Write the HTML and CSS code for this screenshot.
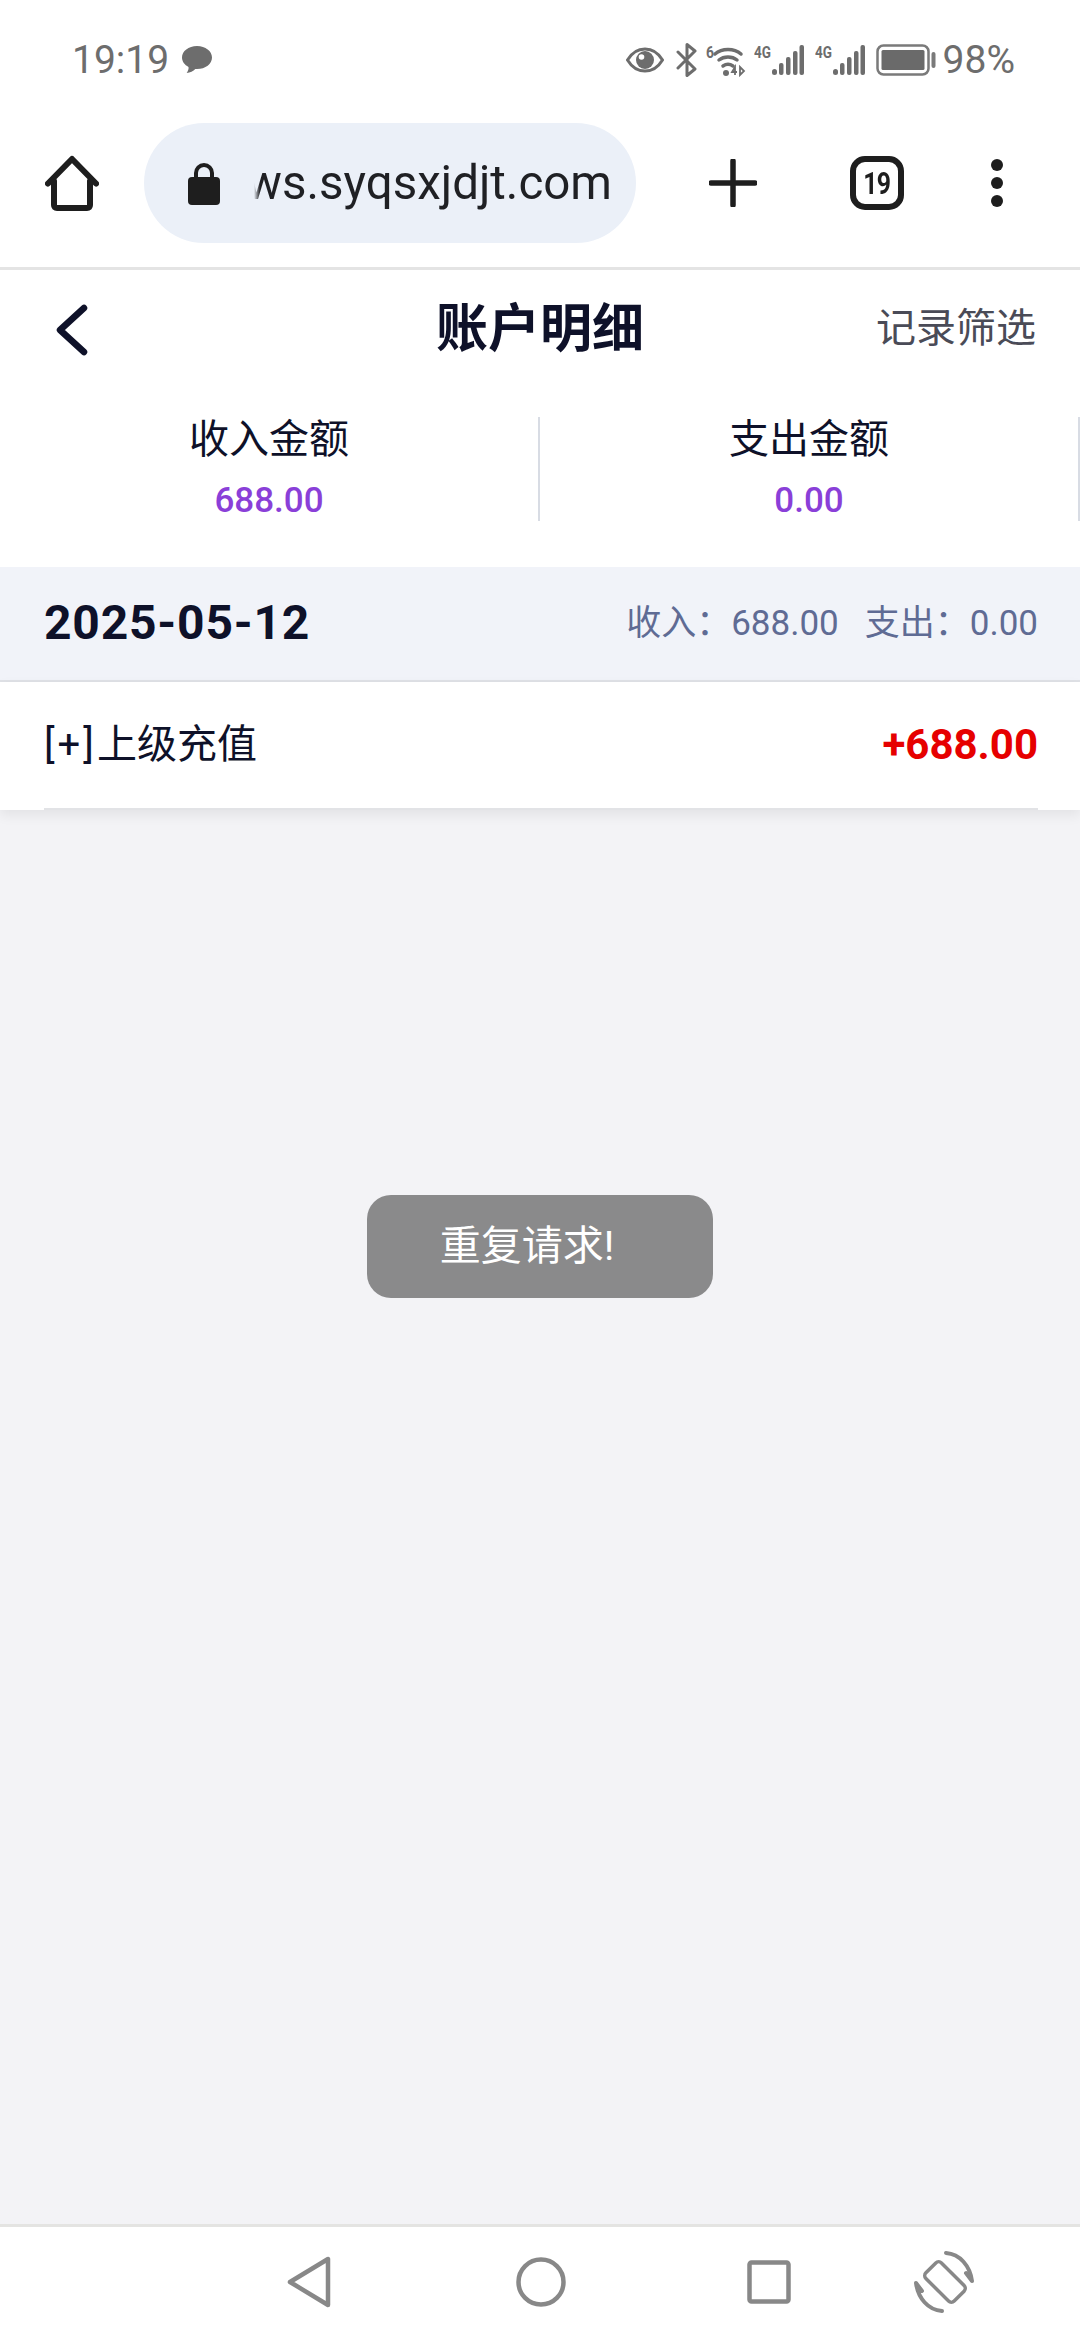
FILE: index.html
```html
<!DOCTYPE html>
<html lang="zh">
<head>
  <meta charset="UTF-8">
  <meta name="viewport" content="width=device-width, initial-scale=1">
  <title>账户明细</title>
  <link rel="stylesheet" href="styles.css">
</head>
<body>

  <!-- Status bar -->
  <div class="status">
    <div class="status-left">
      <span class="time">19:19</span>
      <svg class="ic-msg" viewBox="0 0 32 30"><path d="M16 1C7.5 1 1 6.200 1 12.500c0 4 2.600 7.400 6.500 9.400.4 1.800-.5 4.100-1.800 6.100 3.300-.3 6.700-1.700 8.600-4 .6.100 1.100.1 1.700.1 8.500 0 15-5.300 15-11.600S24.500 1 16 1z" fill="#6d6d6d"/></svg>
    </div>
    <div class="status-right">
      <svg class="ic-eye" viewBox="0 0 38 26"><path d="M1.500 13C6 5.500 12 2 19 2s13 3.500 17.500 11C32 20.500 26 24 19 24S6 20.500 1.500 13z" fill="none" stroke="#6d6d6d" stroke-width="3"/><circle cx="19" cy="13" r="9" fill="#6d6d6d"/><circle cx="15.500" cy="10" r="2.800" fill="#fff"/></svg>
      <svg class="ic-bt" viewBox="0 0 22 34"><path d="M2 9l17 17-8 6.500V1.500l8 6.500L2 25" fill="none" stroke="#6d6d6d" stroke-width="3" stroke-linejoin="round" stroke-linecap="round"/></svg>
      <svg class="ic-wifi" viewBox="0 0 40 34"><text x="0" y="15" class="mini" textLength="8" lengthAdjust="spacingAndGlyphs">6</text><path d="M9 11c7-6 19-6 26 0M13 17c5-4 13-4 18 0M17 23c3-2 7-2 10 0" fill="none" stroke="#6d6d6d" stroke-width="3.500" stroke-linecap="round"/><circle cx="20" cy="30" r="3" fill="#6d6d6d"/><path d="M29 32v-8l-3 5h5M34 24v8l4-4z" fill="none" stroke="#6d6d6d" stroke-width="1.800"/></svg>
      <svg class="ic-signal" viewBox="0 0 50 34"><text x="0" y="15" class="mini" textLength="17" lengthAdjust="spacingAndGlyphs">4G</text><rect x="18" y="26" width="5" height="6" rx="2.500"/><rect x="25" y="20" width="4.500" height="12" rx="2"/><rect x="32" y="14" width="4.500" height="18" rx="2"/><rect x="39" y="8" width="4.500" height="24" rx="2"/><rect x="45.500" y="2" width="4.500" height="30" rx="2"/></svg>
      <svg class="ic-signal" viewBox="0 0 50 34"><text x="0" y="15" class="mini" textLength="17" lengthAdjust="spacingAndGlyphs">4G</text><rect x="18" y="26" width="5" height="6" rx="2.500"/><rect x="25" y="20" width="4.500" height="12" rx="2"/><rect x="32" y="14" width="4.500" height="18" rx="2"/><rect x="39" y="8" width="4.500" height="24" rx="2"/><rect x="45.500" y="2" width="4.500" height="30" rx="2"/></svg>
      <svg class="ic-batt" viewBox="0 0 60 32"><rect x="1.500" y="1.500" width="51" height="29" rx="6" fill="none" stroke="#7a7a7a" stroke-width="2.500"/><rect x="5.500" y="6" width="43" height="20" rx="1.500" fill="#6a6a6a"/><rect x="55.500" y="8" width="4" height="16" rx="2" fill="#7a7a7a"/></svg>
      <span class="batt-text">98%</span>
    </div>
  </div>

  <!-- Browser toolbar -->
  <div class="toolbar">
    <svg class="ic-home" viewBox="0 0 54 56"><path d="M9 26v24c0 1.700 1 3 3 3h30c2 0 3-1.300 3-3V26M3 28.500L27 4l24 24.500" fill="none" stroke="#1e1e1e" stroke-width="6" stroke-linecap="round" stroke-linejoin="round"/></svg>
    <div class="urlbar">
      <svg class="ic-lock" viewBox="0 0 32 43"><path d="M8 18V11a8 8 0 0 1 16 0v7" fill="none" stroke="#1e1e1e" stroke-width="4"/><rect x="0" y="15" width="32" height="28" rx="4" fill="#1e1e1e"/></svg>
      <div class="url">ws.syqsxjdjt.com</div>
    </div>
    <svg class="ic-plus" viewBox="0 0 48 48"><path d="M24 2v44M2 24h44" stroke="#1e1e1e" stroke-width="5.500" stroke-linecap="round"/></svg>
    <div class="tabs"><span>19</span></div>
    <svg class="ic-dots" viewBox="0 0 12 48"><circle cx="6" cy="6" r="6"/><circle cx="6" cy="24" r="6"/><circle cx="6" cy="42" r="6"/></svg>
  </div>

  <!-- Page header -->
  <div class="header">
    <svg class="ic-back" viewBox="0 0 32 52"><path d="M28 4L4 26l24 22" fill="none" stroke="#0e1129" stroke-width="6.500" stroke-linecap="round" stroke-linejoin="round"/></svg>
    <div class="title">账户明细</div>
    <div class="filter">记录筛选</div>
  </div>

  <!-- Totals -->
  <div class="summary">
    <div class="sum-col">
      <div class="sum-label">收入金额</div>
      <div class="sum-value">688.00</div>
    </div>
    <div class="sum-col">
      <div class="sum-label">支出金额</div>
      <div class="sum-value">0.00</div>
    </div>
  </div>

  <!-- Day group -->
  <div class="day">
    <div class="day-date">2025-05-12</div>
    <div class="day-totals">
      <span>收入：688.00</span>
      <span>支出：0.00</span>
    </div>
  </div>
  <div class="record">
    <div class="record-inner">
      <div class="record-name"><span class="record-tag">[+]</span>上级充值</div>
      <div class="record-amount">+688.00</div>
    </div>
  </div>

  <main class="empty">
    <div class="toast">重复请求!</div>
  </main>

  <!-- Navigation bar -->
  <div class="navbar">
    <svg class="ic-navback" viewBox="0 0 44 52"><path d="M41 3v46L3 26z" fill="none" stroke="#888" stroke-width="4.500" stroke-linejoin="round"/></svg>
    <svg class="ic-navhome" viewBox="0 0 50 50"><circle cx="25" cy="25" r="22.500" fill="none" stroke="#888" stroke-width="4.500"/></svg>
    <svg class="ic-navrecent" viewBox="0 0 44 44"><rect x="2.500" y="2.500" width="39" height="39" rx="2" fill="none" stroke="#888" stroke-width="4.500"/></svg>
    <svg class="ic-navrotate" viewBox="0 0 64 62"><rect x="21" y="11" width="22" height="40" rx="4" transform="rotate(-45 32 31)" fill="none" stroke="#888" stroke-width="3.500"/><path d="M33 2C47 3 57 15 59 30l-6-8M29 60C15 59 5 47 3 32l6 8" fill="none" stroke="#888" stroke-width="4" stroke-linecap="round" stroke-linejoin="round"/></svg>
  </div>

</body>
</html>
```

FILE: styles.css
```css
html, body {
  margin: 0;
  padding: 0;
  background: #fff;
}
body {
  width: 1080px;
  height: 2340px;
  overflow: hidden;
  display: flex;
  flex-direction: column;
  font-family: Roboto, "Noto Sans CJK SC", sans-serif;
  color: #0e1129;
}
svg { display: block; flex: none; }

/* Status bar */
.status {
  height: 120px;
  display: flex;
  justify-content: space-between;
  align-items: center;
  padding: 0 65px 0 72px;
  color: #6d6d6d;
  font-size: 39px;
}
.status-left { display: flex; align-items: center; gap: 12px; }
.status-right { display: flex; align-items: center; }
.time, .batt-text { line-height: 46px; }
.ic-msg { width: 32px; height: 30px; }
.ic-eye { width: 38px; height: 26px; }
.ic-bt { width: 22px; height: 34px; margin-left: 12px; }
.ic-wifi { width: 40px; height: 34px; margin-left: 8px; }
.ic-signal { width: 50px; height: 34px; fill: #6d6d6d; margin-left: 8px; }
.ic-signal + .ic-signal { margin-left: 11px; }
.ic-batt { width: 60px; height: 32px; margin-left: 11px; }
.batt-text { margin-left: 7px; }
.mini {
  font-family: Roboto, sans-serif;
  font-size: 16px;
  font-weight: 700;
  fill: #6d6d6d;
}

/* Browser toolbar */
.toolbar {
  display: flex;
  align-items: center;
  padding: 3px 0 24px 45px;
  border-bottom: 3px solid #e4e4e4;
}
.ic-home { width: 54px; height: 56px; }
.urlbar {
  width: 492px;
  height: 120px;
  margin-left: 45px;
  border-radius: 60px;
  background: #ebf0f8;
  display: flex;
  justify-content: space-between;
  align-items: center;
  padding: 0 24px 0 44px;
  box-sizing: border-box;
}
.ic-lock { width: 32px; height: 43px; }
/* the start of the address fades out, the text itself is never clipped */
.url {
  white-space: nowrap;
  font-size: 47.5px;
  color: #1f2024;
  -webkit-mask-image: linear-gradient(to left, #000 352px, transparent 358px);
  mask-image: linear-gradient(to left, #000 352px, transparent 358px);
}
.ic-plus { width: 48px; height: 48px; margin-left: 73px; }
.tabs {
  width: 54px;
  height: 54px;
  box-sizing: border-box;
  margin-left: 93px;
  border: 6px solid #1e1e1e;
  border-radius: 15px;
  display: flex;
  justify-content: center;
  align-items: center;
  font-size: 31px;
  font-weight: 700;
  letter-spacing: -1px;
  color: #1e1e1e;
}
.tabs span { display: block; transform: scaleX(0.8); }
.ic-dots { width: 12px; height: 48px; margin-left: 87px; fill: #1e1e1e; }

/* Page header */
.header {
  height: 120px;
  display: grid;
  grid-template-columns: 1fr auto 1fr;
  align-items: center;
  padding: 0 44px 0 56px;
}
.ic-back { width: 32px; height: 52px; }
.title {
  font-size: 52px;
  font-weight: 700;
  margin-left: -12px;
  padding-bottom: 12px;
}
.filter {
  justify-self: end;
  font-size: 40px;
  color: #4a4b57;
  padding-bottom: 10px;
}

/* Totals */
.summary {
  display: grid;
  grid-template-columns: 1fr 1fr;
  padding: 27px 0 46px;
}
.sum-col {
  height: 104px;
  border-right: 2px solid #d8dce4;
  text-align: center;
}
.sum-label { font-size: 40px; line-height: 46px; }
.sum-value {
  margin-top: 20px;
  font-size: 35px;
  line-height: 36px;
  font-weight: 500;
  color: #8a3fd8;
}

/* Day group */
.day {
  height: 113px;
  display: flex;
  justify-content: space-between;
  align-items: center;
  padding: 0 42px 0 44px;
  background: #f1f3f9;
  border-bottom: 2px solid #dfe1e6;
}
.day-date { font-size: 48px; font-weight: 700; letter-spacing: 0.8px; padding-bottom: 3px; }
.day-totals { display: flex; gap: 26px; font-size: 35px; color: #5f6b94; padding-bottom: 8px; }

.record {
  padding: 0 42px 0 44px;
  background: #fff;
  box-shadow: 0 5px 12px rgba(0,0,0,0.07);
  position: relative;
  z-index: 1;
}
.record-inner {
  height: 126px;
  display: flex;
  justify-content: space-between;
  align-items: center;
  border-bottom: 2px solid #e2e3e6;
}
.record-name { font-size: 40px; padding-bottom: 8px; }
.record-tag { letter-spacing: 3px; }
.record-amount { font-size: 42px; font-weight: 700; color: #e60000; padding-bottom: 2px; }

/* Empty area with the toast over it */
.empty {
  flex: 1;
  background: #f3f3f6;
  position: relative;
}
.toast {
  position: absolute;
  top: 385px;
  left: 367px;
  width: 346px;
  height: 103px;
  box-sizing: border-box;
  padding: 0 26px 10px 0;
  border-radius: 24px;
  background: #8a8a8b;
  color: #fff;
  font-size: 41px;
  display: flex;
  justify-content: center;
  align-items: center;
}

/* Navigation bar */
.navbar {
  height: 116px;
  box-sizing: border-box;
  display: flex;
  align-items: center;
  padding: 0 0 3px 287px;
  background: #fff;
  border-top: 3px solid #e4e4e2;
}
.ic-navback { width: 44px; height: 52px; }
.ic-navhome { width: 50px; height: 50px; margin-left: 185px; }
.ic-navrecent { width: 44px; height: 44px; margin-left: 181px; }
.ic-navrotate { width: 64px; height: 62px; margin-left: 122px; }
```
